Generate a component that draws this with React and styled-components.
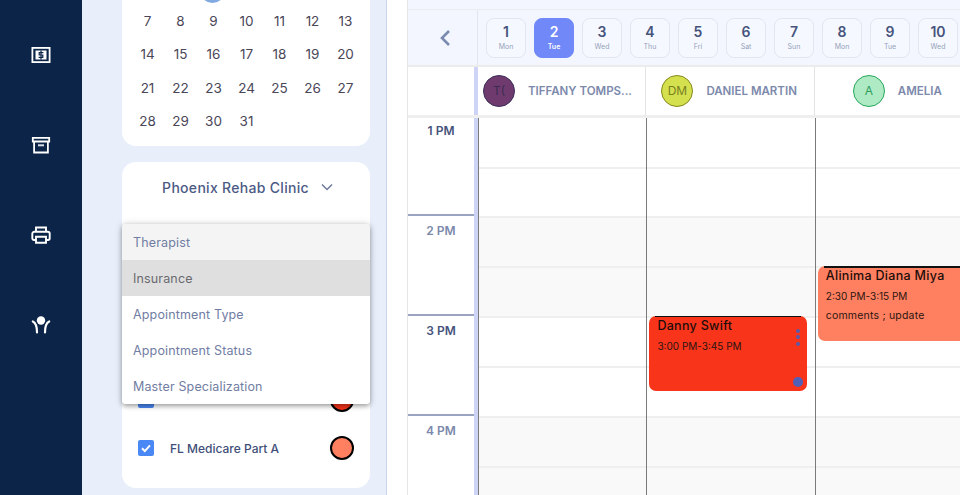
import React from 'react';
import styled, { createGlobalStyle } from 'styled-components';

const weeks = [
  [7, 8, 9, 10, 11, 12, 13],
  [14, 15, 16, 17, 18, 19, 20],
  [21, 22, 23, 24, 25, 26, 27],
  [28, 29, 30, 31],
];
const menuItems = ['Therapist', 'Insurance', 'Appointment Type', 'Appointment Status', 'Master Specialization'];
const days = [
  [1, 'Mon'], [2, 'Tue'], [3, 'Wed'], [4, 'Thu'], [5, 'Fri'],
  [6, 'Sat'], [7, 'Sun'], [8, 'Mon'], [9, 'Tue'], [10, 'Wed'],
];
const hours = ['1 PM', '2 PM', '3 PM', '4 PM'];

const Slots = () =>
  hours.map((hour, i) => <HourSlot key={hour} $shaded={i % 2 === 1} />);

const App = () => (
  <>
    <GlobalStyle />
    <Page>
      <Sidebar>
        <NavIcon viewBox="0 0 20 20">
          <rect x="1.4" y="2.9" width="17.2" height="14.2" fill="none" stroke="#fff" strokeWidth="1.8" />
          <rect x="4.5" y="5.5" width="11" height="9" fill="#fff" />
          <path d="M12.4 7.7H8.2V10h3.600v2.300H7.600M10 5.500v9" fill="none" stroke="#0b2447" strokeWidth="1.200" />
        </NavIcon>
        <NavIcon viewBox="0 0 20 20">
          <path d="M1.800 2.900h16.400v3.600H1.800zM3.100 6.500v11h13.800v-11" fill="none" stroke="#fff" strokeWidth="1.800" />
          <rect x="7" y="9.300" width="6" height="2" fill="#d8dde6" />
        </NavIcon>
        <NavIcon viewBox="0 0 20 20">
          <path
            d="M5 7V2.500h10V7M5 15H3a1.700 1.700 0 0 1-1.700-1.700V8.700A1.900 1.900 0 0 1 3.200 6.800h13.600a1.900 1.900 0 0 1 1.900 1.900v4.600A1.700 1.700 0 0 1 17 15h-2M5 11.700h10v6.100H5z"
            fill="none"
            stroke="#fff"
            strokeWidth="1.900"
          />
        </NavIcon>
        <NavIcon viewBox="0 0 20 20">
          <circle cx="10" cy="5.500" r="4.200" fill="#fff" />
          <path
            d="M1.800 6.500C4.500 7.800 6 10.500 6 17.500M18.200 6.500C15.500 7.800 14 10.500 14 17.500"
            fill="none"
            stroke="#fff"
            strokeWidth="2.200"
            strokeLinecap="round"
          />
        </NavIcon>
      </Sidebar>

      <FilterPanel>
        <CalendarCard>
          <TodayMark />
          {weeks.map(week => (
            <Week key={week[0]}>
              {week.map(day => (
                <DayNumber key={day}>{day}</DayNumber>
              ))}
            </Week>
          ))}
        </CalendarCard>

        <FilterCard>
          <ClinicSelect>
            Phoenix Rehab Clinic
            <svg width="14" height="14" viewBox="0 0 14 14">
              <path d="M2 4.500l5 5 5-5" fill="none" stroke="#6d7a99" strokeWidth="1.500" />
            </svg>
          </ClinicSelect>
          <InsuranceList>
            <InsuranceRow>
              <CheckBox />
              <InsuranceName />
              <ColorDot $color="#f8341b" />
            </InsuranceRow>
            <InsuranceRow>
              <CheckBox>
                <svg width="12" height="12" viewBox="0 0 12 12">
                  <path d="M2 6.300l2.800 2.800L10 3.300" fill="none" stroke="#fff" strokeWidth="2" />
                </svg>
              </CheckBox>
              <InsuranceName>FL Medicare Part A</InsuranceName>
              <ColorDot $color="#ff8060" />
            </InsuranceRow>
          </InsuranceList>
          <Menu>
            {menuItems.map((item, i) => (
              <MenuItem key={item} $state={i}>
                {item}
              </MenuItem>
            ))}
          </Menu>
        </FilterCard>
      </FilterPanel>

      <Gutter />

      <Scheduler>
        <TopStrip />
        <DateBar>
          <BackCell>
            <svg width="14" height="20" viewBox="0 0 14 20">
              <path d="M11 3L4 10l7 7" fill="none" stroke="#7b8bb0" strokeWidth="2.600" />
            </svg>
          </BackCell>
          <DateList>
            {days.map(([num, name]) => (
              <DateChip key={num} $active={num === 2}>
                <DateNum>{num}</DateNum>
                <DateName $active={num === 2}>{name}</DateName>
              </DateChip>
            ))}
          </DateList>
        </DateBar>

        <ResourceRow>
          <CornerCell />
          <Resource $inset={5}>
            <Avatar $bg="#6f3b6f" $edge="#3b2f58" $fg="#3b2b4f">T(</Avatar>
            <ResourceName>TIFFANY TOMPS...</ResourceName>
          </Resource>
          <Resource $inset={15}>
            <Avatar $bg="#d5e04f" $edge="#85891c" $fg="#77801f">DM</Avatar>
            <ResourceName>DANIEL MARTIN</ResourceName>
          </Resource>
          <Resource $inset={38}>
            <Avatar $bg="#aeeac4" $edge="#27a75c" $fg="#2e9c5c">A</Avatar>
            <ResourceName>AMELIA</ResourceName>
          </Resource>
        </ResourceRow>

        <Grid>
          <TimeColumn>
            {hours.map((hour, i) => (
              <HourLabel key={hour} $first={i === 0} $dark={i % 2 === 0}>
                {hour}
              </HourLabel>
            ))}
          </TimeColumn>
          <TimeStrip />
          <Column>
            <Slots />
          </Column>
          <Column>
            <Slots />
            <Appointment $color="#f8341b" $top={198} $left={2} $right={8}>
              <AppointmentName>Danny Swift</AppointmentName>
              <AppointmentLine>3:00 PM-3:45 PM</AppointmentLine>
              <MoreDots>
                <i />
                <i />
                <i />
              </MoreDots>
              <StatusDot />
            </Appointment>
          </Column>
          <Column>
            <Slots />
            <Appointment $color="#ff8060" $top={148.5} $left={2} $right={-8}>
              <AppointmentName>Alinima Diana Miya</AppointmentName>
              <AppointmentLine>2:30 PM-3:15 PM</AppointmentLine>
              <AppointmentNote>comments ; update</AppointmentNote>
            </Appointment>
          </Column>
        </Grid>
      </Scheduler>
    </Page>
  </>
);
export default App;

const GlobalStyle = createGlobalStyle`
  html, body {
    margin: 0;
    height: 100%;
    overflow: hidden;
    background: #fff;
    font-family: Inter, "Noto Sans", sans-serif;
  }
`;

const Page = styled.div`
  display: flex;
  width: 960px;
  height: 495px;
  overflow: hidden;
`;

const Sidebar = styled.nav`
  flex: 0 0 82px;
  display: flex;
  flex-direction: column;
  align-items: center;
  gap: 70px;
  padding-top: 45px;
  box-sizing: border-box;
  background: #0b2447;
`;

const NavIcon = styled.svg`
  width: 20px;
  height: 20px;
`;

const FilterPanel = styled.aside`
  flex: 0 0 305px;
  display: flex;
  flex-direction: column;
  gap: 16px;
  padding: 0 16px 0 40px;
  box-sizing: border-box;
  background: #e8effa;
  border-right: 1px solid #c9d4ea;
`;

const CalendarCard = styled.section`
  position: relative;
  height: 146px;
  padding-top: 5px;
  box-sizing: border-box;
  background: #fff;
  border-radius: 0 0 14px 14px;
`;

const TodayMark = styled.div`
  position: absolute;
  top: -22px;
  left: 78px;
  width: 25px;
  height: 25px;
  border-radius: 50%;
  background: #7fa9e0;
`;

const Week = styled.div`
  display: grid;
  grid-template-columns: repeat(7, 33px);
  justify-content: center;
  height: 33.3px;
  line-height: 32px;
  text-align: center;
  margin-left: 1px;
`;

const DayNumber = styled.span`
  font-size: 13.5px;
  color: #4a4658;
`;

const FilterCard = styled.section`
  position: relative;
  height: 326px;
  background: #fff;
  border-radius: 14px;
`;

const ClinicSelect = styled.div`
  display: flex;
  justify-content: center;
  align-items: center;
  gap: 11px;
  height: 50px;
  padding-left: 4px;
  font-size: 14px;
  font-weight: 500;
  letter-spacing: 0.3px;
  color: #4c5a85;
`;

const InsuranceList = styled.div`
  display: flex;
  flex-direction: column;
  gap: 24px;
  padding: 176px 16px 0;
`;

const InsuranceRow = styled.div`
  display: flex;
  align-items: center;
  height: 24px;
`;

const CheckBox = styled.span`
  display: flex;
  align-items: center;
  justify-content: center;
  width: 16px;
  height: 16px;
  border-radius: 2px;
  background: #4a88f5;
`;

const InsuranceName = styled.span`
  flex: 1;
  margin-left: 16px;
  font-size: 12px;
  font-weight: 500;
  color: #3f4f78;
`;

const ColorDot = styled.span`
  width: 24px;
  height: 24px;
  box-sizing: border-box;
  border: 2px solid #000;
  border-radius: 50%;
  background: ${props => props.$color};
`;

const Menu = styled.ul`
  position: absolute;
  top: 62px;
  left: 0;
  right: 0;
  margin: 0;
  padding: 0;
  list-style: none;
  overflow: hidden;
  background: #fff;
  border-radius: 4px;
  box-shadow: 0 2px 5px rgba(0, 0, 0, 0.35), 0 0 8px rgba(0, 0, 0, 0.12);
`;

const MenuItem = styled.li`
  height: 36px;
  line-height: 37px;
  padding-left: 11px;
  font-size: 12.5px;
  letter-spacing: 0.15px;
  color: ${props => (props.$state === 1 ? '#6a6a70' : '#717da3')};
  background: ${props => (props.$state === 0 ? '#f4f4f4' : props.$state === 1 ? '#dfdfdf' : '#fff')};
`;

const Gutter = styled.div`
  flex: 0 0 20px;
`;

const Scheduler = styled.main`
  flex: 1;
  min-width: 0;
  display: flex;
  flex-direction: column;
  border-left: 1px solid #e6e6e6;
`;

const TopStrip = styled.div`
  flex: 0 0 10px;
  box-sizing: border-box;
  background: #f3f6fe;
  border-bottom: 1px solid #ececec;
`;

const DateBar = styled.div`
  flex: 0 0 55px;
  display: flex;
  background: #f3f6fe;
`;

const BackCell = styled.div`
  flex: 0 0 70px;
  display: flex;
  align-items: center;
  justify-content: center;
  padding-left: 5px;
  box-sizing: border-box;
  border-right: 1px solid #e3e5ec;
`;

const DateList = styled.div`
  display: flex;
  gap: 8px;
  padding: 7.5px 0 0 8px;
`;

const DateChip = styled.div`
  flex: 0 0 40px;
  display: flex;
  flex-direction: column;
  align-items: center;
  height: 40px;
  padding-top: 4px;
  box-sizing: border-box;
  border: 1px solid ${props => (props.$active ? '#7088f8' : '#e3e6ee')};
  border-radius: 8px;
  color: ${props => (props.$active ? '#fff' : '#46547c')};
  background: ${props => (props.$active ? '#7088f8' : '#f5f8ff')};
`;

const DateNum = styled.span`
  font-size: 14px;
  line-height: 17px;
  font-weight: 600;
`;

const DateName = styled.span`
  font-size: 7px;
  line-height: 10px;
  margin-top: 2px;
  font-weight: ${props => (props.$active ? 600 : 400)};
  opacity: ${props => (props.$active ? 1 : 0.55)};
`;

const ResourceRow = styled.div`
  flex: 0 0 52.5px;
  display: flex;
  box-sizing: border-box;
  border-top: 2px solid #ececec;
  border-bottom: 3.5px solid #efefef;
`;

const CornerCell = styled.div`
  flex: 0 0 70px;
  box-sizing: border-box;
  border-right: 4px solid #cdd4f5;
`;

const Resource = styled.div`
  flex: 0 0 168.4px;
  display: flex;
  align-items: center;
  gap: 13px;
  padding-left: ${props => props.$inset}px;
  box-sizing: border-box;
  border-right: 1px solid #e4e4e4;
`;

const Avatar = styled.div`
  flex: none;
  display: flex;
  align-items: center;
  justify-content: center;
  width: 32px;
  height: 32px;
  box-sizing: border-box;
  border: 1.5px solid ${props => props.$edge};
  border-radius: 50%;
  font-size: 12px;
  color: ${props => props.$fg};
  background: ${props => props.$bg};
`;

const ResourceName = styled.span`
  font-size: 11.5px;
  font-weight: 600;
  white-space: nowrap;
  color: #7c89ab;
`;

const Grid = styled.div`
  flex: 1;
  display: flex;
  min-height: 0;
`;

const TimeColumn = styled.div`
  flex: 0 0 66px;
`;

const HourLabel = styled.div`
  height: ${props => (props.$first ? '96.5px' : '100px')};
  padding-top: ${props => (props.$first ? '5px' : '7px')};
  box-sizing: border-box;
  line-height: 15px;
  text-align: center;
  font-size: 12px;
  font-weight: 600;
  color: ${props => (props.$dark ? '#46547c' : '#7c89ab')};
  border-top: ${props => (props.$first ? '0' : '2px solid #9aa4c0')};
`;

const TimeStrip = styled.div`
  flex: 0 0 4px;
  background: #cdd4f5;
`;

const Column = styled.div`
  position: relative;
  flex: 0 0 168.4px;
  box-sizing: border-box;
  border-left: 1px solid #7a7a7a;
`;

const HourSlot = styled.div`
  height: 100px;
  box-sizing: border-box;
  border-bottom: 2px solid #efefef;
  background: linear-gradient(
    to bottom,
    ${props => (props.$shaded ? '#f9f9f9' : '#fff')} 0 48.5px,
    #efefef 48.5px 50.5px,
    ${props => (props.$shaded ? '#f9f9f9' : '#fff')} 50.5px
  );
`;

const Appointment = styled.article`
  position: absolute;
  top: ${props => props.$top}px;
  left: ${props => props.$left}px;
  right: ${props => props.$right}px;
  height: 75px;
  padding: 2px 8px;
  box-sizing: border-box;
  border-radius: 7px;
  background: ${props => props.$color};
  color: #2b1510;
  &::before {
    content: '';
    position: absolute;
    top: 0;
    left: 6px;
    right: 6px;
    height: 1.5px;
    background: #111;
  }
`;

const AppointmentName = styled.div`
  font-size: 12.5px;
  line-height: 16px;
  font-weight: 500;
  letter-spacing: 0.3px;
  white-space: nowrap;
  color: #1d0d0a;
`;

const AppointmentLine = styled.div`
  margin-top: 4px;
  font-size: 10px;
  line-height: 16px;
  white-space: nowrap;
`;

const AppointmentNote = styled(AppointmentLine)`
  font-size: 10.5px;
  letter-spacing: 0.2px;
`;

const MoreDots = styled.div`
  position: absolute;
  top: 13px;
  right: 7px;
  display: flex;
  flex-direction: column;
  gap: 2.5px;
  i {
    width: 4px;
    height: 4px;
    border-radius: 50%;
    background: #5a5aa8;
  }
`;

const StatusDot = styled.span`
  position: absolute;
  right: 4px;
  bottom: 4px;
  width: 10px;
  height: 10px;
  border-radius: 50%;
  background: #5060b8;
`;
